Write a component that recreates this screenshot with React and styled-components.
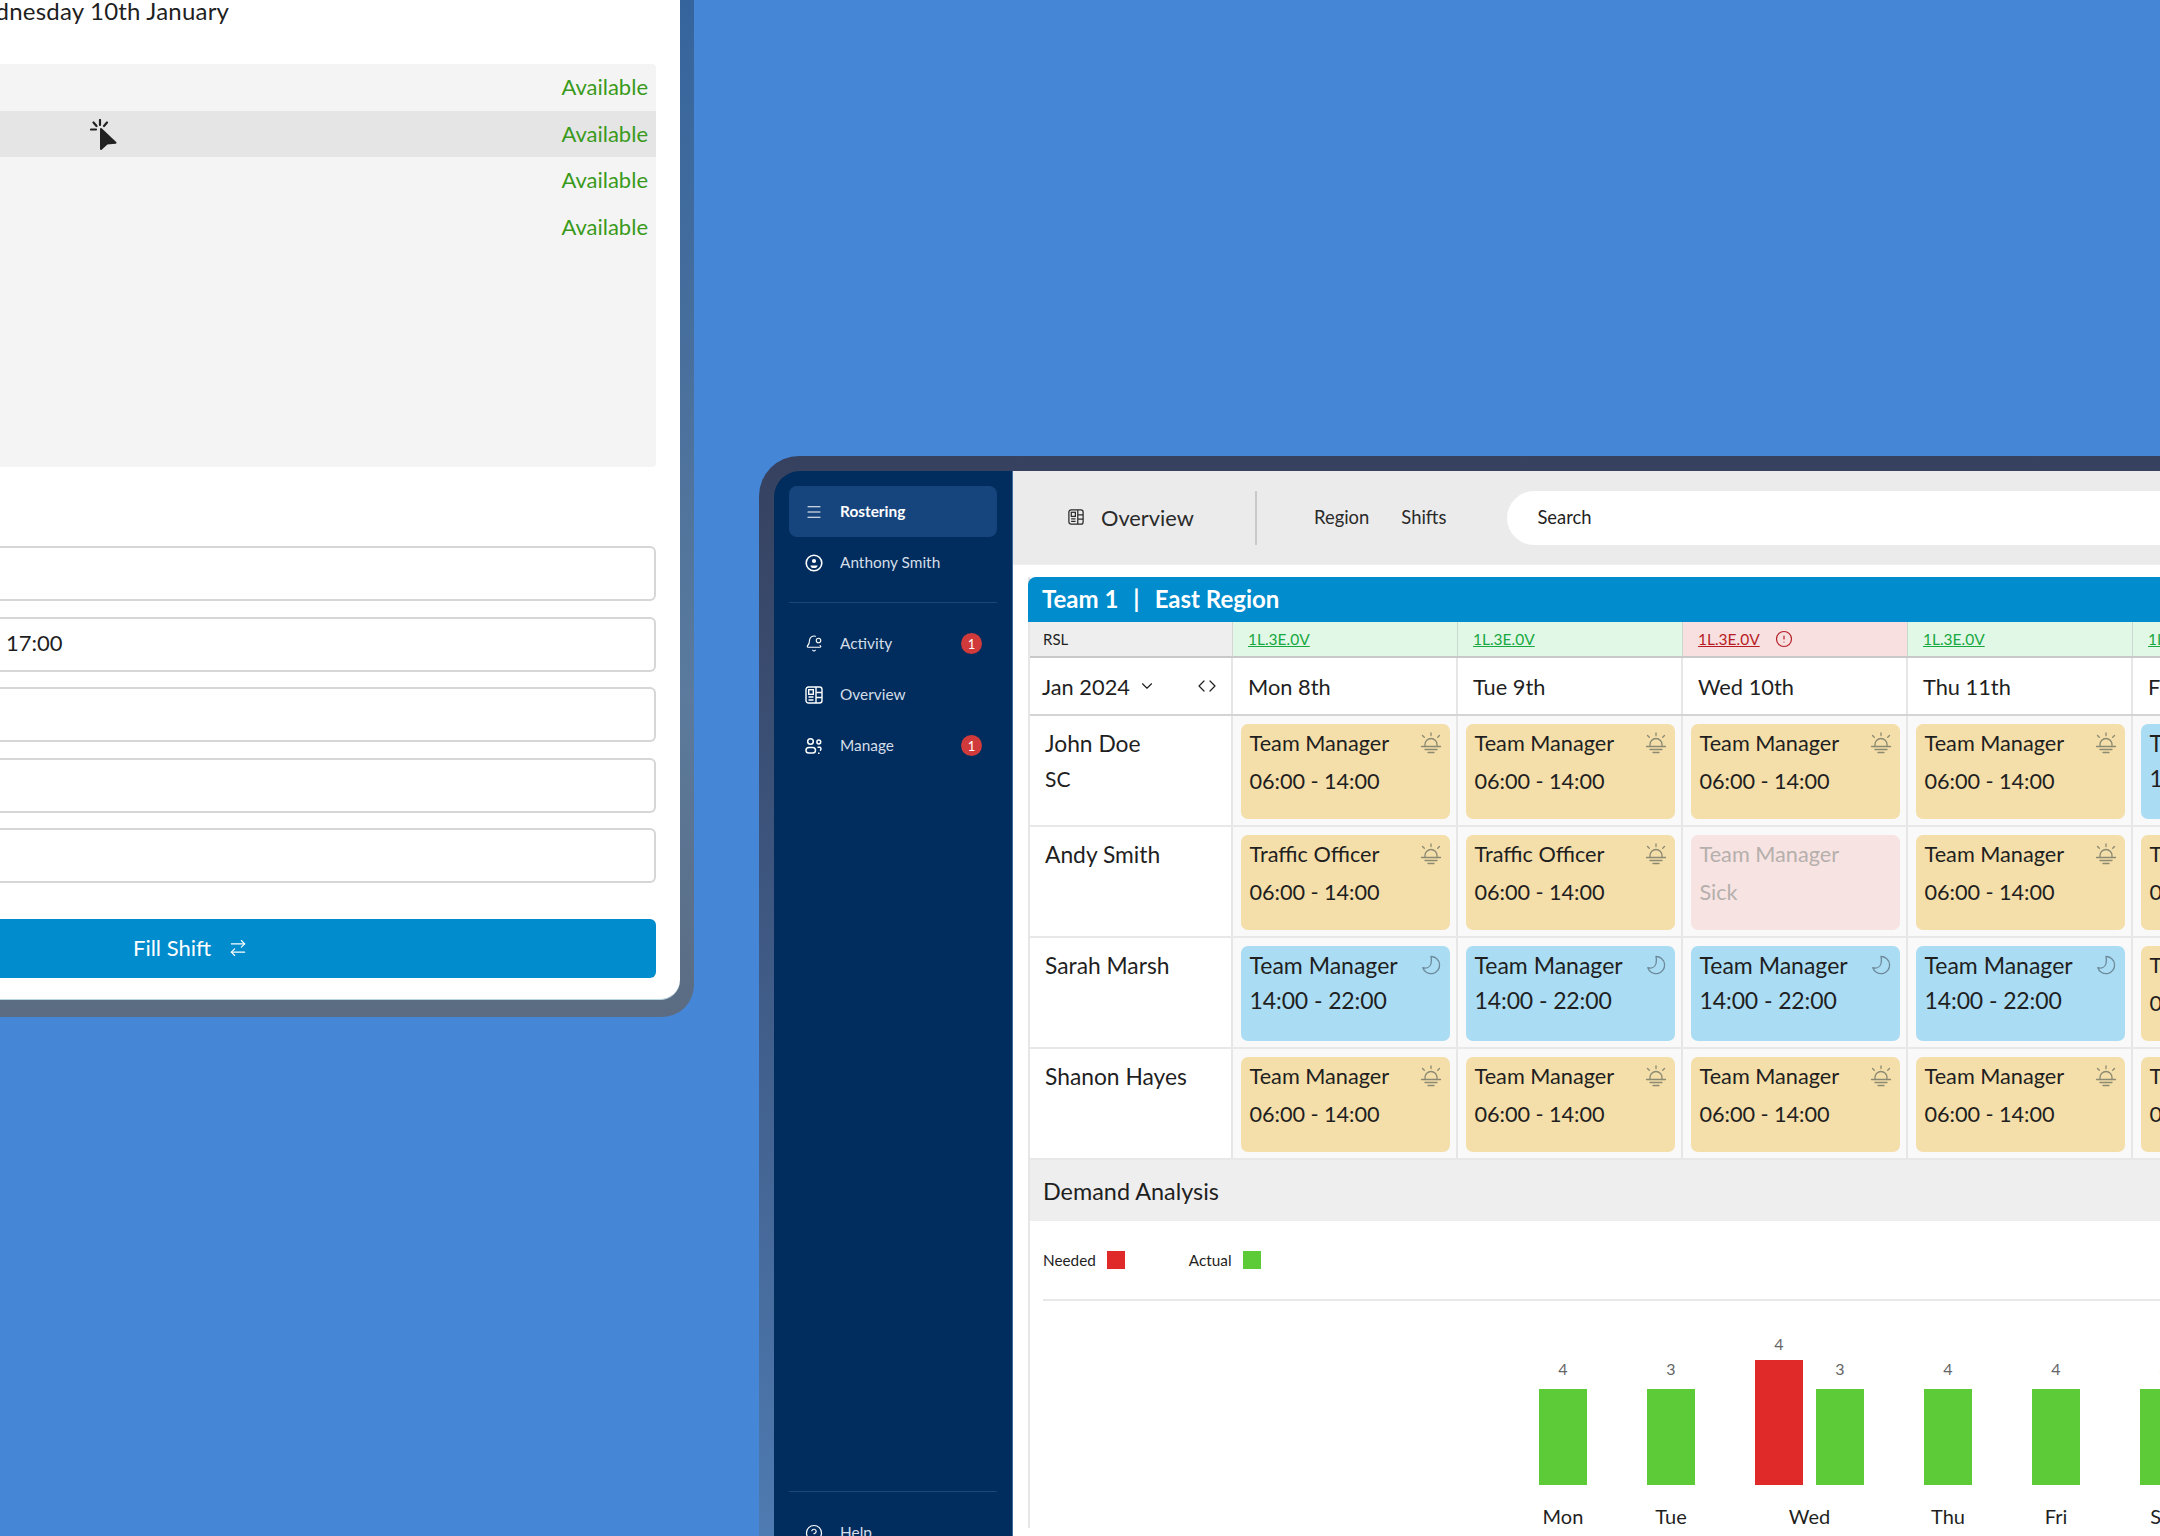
import styled, { createGlobalStyle } from "styled-components";
import {
  Menu,
  BellDot,
  CircleHelp,
  CircleAlert,
  ChevronDown,
  ChevronsLeftRight,
  ArrowRightLeft,
} from "lucide-react";

const GlobalStyle = createGlobalStyle`
  html, body { margin: 0; padding: 0; background: #4586d7; }
  * { box-sizing: border-box; }
  body { font-family: "Lato", "Noto Sans", sans-serif; color: #1f1f1f; }
`;

const Stage = styled.div`
  width: 2160px;
  height: 1536px;
  overflow: hidden;
  display: flex;
  align-items: flex-start;
  background: #4586d7;
`;

/* left window, cut off by the top and left of the picture */
const BackWindow = styled.div`
  flex: none;
  width: 900px;
  margin-left: -206px;
  margin-top: -40px;
  padding: 0 14px 17px 0;
  border-radius: 0 0 32px 0;
  background: linear-gradient(180deg, #33639d 0%, #5b7a9c 70%, #5b6c82 100%);
`;

const BackPanel = styled.div`
  background: #fff;
  border-radius: 0 0 20px 0;
  border-bottom: 1px solid #b9d5e0;
  padding: 40px 24px 21px 0;
`;

const DayTitle = styled.div`
  margin: -3px 0 0 165px;
  height: 28px;
  line-height: 28px;
  font-size: 24px;
  letter-spacing: 0.2px;
`;

const StaffList = styled.div`
  margin-top: 39px;
  height: 403px;
  background: #f4f4f4;
  border-radius: 0 4px 4px 0;
`;

const StaffRow = styled.div`
  height: 46.5px;
  display: flex;
  align-items: center;
  justify-content: flex-end;
  padding: 0 8px 1px 0;
  position: relative;
  font-size: 22px;
  color: #3a9a1c;
  background: ${(p) => (p.$hover ? "#e5e5e5" : "transparent")};
`;

const Pointer = styled.svg`
  position: absolute;
  left: 296px;
  top: 8px;
`;

const FormFields = styled.div`
  margin-top: 79px;
  display: flex;
  flex-direction: column;
  gap: 15.5px;
`;

const Field = styled.div`
  height: 55px;
  border: 2px solid #d6d6d6;
  border-left: 0;
  border-radius: 0 6px 6px 0;
  display: flex;
  align-items: center;
  padding: 0 0 3px 212px;
  font-size: 22px;
`;

const FillButton = styled.div`
  margin-top: 36px;
  height: 59px;
  background: #008ccd;
  border-radius: 0 6px 6px 0;
  color: #fff;
  font-size: 22px;
  display: flex;
  align-items: center;
  gap: 17px;
  padding: 0 0 2px 339px;
`;

/* right window, runs off the right and bottom */
const FrontWindow = styled.div`
  flex: none;
  width: 1500px;
  margin-left: 65px;
  margin-top: 456px;
  padding: 15px 0 0 15px;
  border-radius: 40px 0 0 0;
  background: linear-gradient(180deg, #36415f 0%, #3f5a85 45%, #4f7db5 100%);
  display: flex;
`;

const Sidebar = styled.aside`
  flex: none;
  width: 239px;
  height: 1105px;
  background: #002d5d;
  border-radius: 26px 0 0 0;
  padding: 15px 15px 30px;
  display: flex;
  flex-direction: column;
  border-right: 1px solid #3f6d9c;
`;

const NavItem = styled.div`
  height: 51px;
  display: flex;
  align-items: center;
  gap: 17px;
  padding-left: 16px;
  padding-right: 15px;
  border-radius: 8px;
  font-size: 15.4px;
  font-weight: ${(p) => (p.$active ? 700 : 400)};
  color: ${(p) => (p.$active ? "#fff" : "#d4dde8")};
  background: ${(p) => (p.$active ? "#16447c" : "transparent")};
`;

const NavIcon = styled.span`
  width: 18px;
  height: 18px;
  flex: none;
  display: flex;
  align-items: center;
  justify-content: center;
  color: #fff;
`;

const NavLabel = styled.span`
  flex: 1;
  padding-bottom: 2px;
`;

const Badge = styled.span`
  width: 21px;
  height: 21px;
  border-radius: 50%;
  background: #d13a3a;
  color: #fff;
  font-size: 13px;
  display: flex;
  align-items: center;
  justify-content: center;
`;

const NavRule = styled.div`
  height: 1px;
  background: #1b4676;
  margin: 14px 0 15px;
`;

const NavFoot = styled.div`
  margin-top: auto;
  border-top: 1px solid #1b4676;
  padding-top: 28px;
`;

const HelpItem = styled(NavItem)`
  height: 26px;
`;

const Main = styled.main`
  flex: 1;
  min-width: 0;
  background: #fff;
`;

const TopBar = styled.div`
  height: 94px;
  background: #ebebeb;
  display: flex;
  align-items: center;
  padding-left: 55px;
  border-bottom: 1px solid #f0f0f0;
`;

const TopTitle = styled.div`
  display: flex;
  align-items: center;
  gap: 17px;
  font-size: 21.8px;
  width: 187px;
  padding-bottom: 1px;
  color: #2a2a2a;
`;

const TopRule = styled.div`
  width: 2px;
  height: 54px;
  background: #c9c9c9;
  margin-right: 57px;
`;

const TopLink = styled.div`
  font-size: 18.4px;
  color: #2a2a2a;
  padding-bottom: 2px;
  margin-right: ${(p) => p.$gap}px;
`;

const SearchPill = styled.div`
  flex: 1;
  height: 54px;
  background: #fff;
  border-radius: 27px 0 0 27px;
  display: flex;
  align-items: center;
  padding: 0 0 2px 30px;
  font-size: 18.4px;
`;

const Roster = styled.section`
  margin: 12px 0 0 15px;
  border-left: 2px solid #e6e6e6;
`;

const TeamHeader = styled.div`
  margin-left: -2px;
  height: 45px;
  background: #008ccd;
  border-radius: 8px 0 0 0;
  color: #fff;
  font-size: 24px;
  font-weight: 700;
  display: flex;
  align-items: center;
  padding: 0 0 2px 14px;
  gap: 15px;
`;

const Grid = styled.div`
  display: grid;
  grid-template-columns: 203px repeat(6, 225px);
`;

const RslGrid = styled(Grid)`
  height: 36px;
  border-bottom: 2px solid #c9c9c9;
`;

const RslLabel = styled.div`
  background: #eee;
  font-size: 15px;
  padding-left: 13px;
  display: flex;
  align-items: center;
  border-right: 1px solid #d5d5d5;
`;

const RslCell = styled.div`
  background: ${(p) => (p.$bad ? "#f8e0e1" : "#e1f8e7")};
  color: ${(p) => (p.$bad ? "#b71c24" : "#18a83f")};
  font-size: 15.5px;
  padding-left: 15px;
  display: flex;
  align-items: center;
  gap: 15px;
  text-decoration: underline;
  border-right: 1px solid #c9d9cf;
`;

const DateGrid = styled(Grid)`
  height: 58px;
  border-bottom: 2px solid #d4d4d4;
`;

const MonthCell = styled.div`
  font-size: 21.8px;
  padding-left: 12px;
  padding-right: 12px;
  display: flex;
  align-items: center;
  border-right: 2px solid #e6e6e6;
`;

const MonthArrows = styled.span`
  margin-left: auto;
  display: flex;
`;

const MonthChevron = styled.span`
  margin-left: 8px;
  display: flex;
`;

const DateCell = styled.div`
  font-size: 21.8px;
  padding-left: 15px;
  display: flex;
  align-items: center;
  border-right: 2px solid #e6e6e6;
`;

const PersonGrid = styled(Grid)`
  height: 111px;
  border-bottom: 2px solid #e8e8e8;
`;

const PersonCell = styled.div`
  padding: 9px 0 0 15px;
  font-size: 22.8px;
  line-height: 36px;
  border-right: 2px solid #e6e6e6;
`;

const PersonTag = styled.div`
  font-size: 21px;
`;

const ShiftCell = styled.div`
  background: #f9f9f9;
  padding: 8px 6px 0 8px;
  border-right: 2px solid #e6e6e6;
`;

const shiftColors = { day: "#f4dea9", night: "#aadcf3", sick: "#f8e3e3" };

const ShiftCard = styled.div`
  height: 95px;
  border-radius: 7px;
  background: ${(p) => shiftColors[p.$kind]};
  color: ${(p) => (p.$kind === "sick" ? "#b5b0ac" : "#1f1f1f")};
  padding: 0 9px 0 8.5px;
  position: relative;
  font-size: ${(p) => (p.$kind === "night" ? "23px" : "21.7px")};
`;

const ShiftTitle = styled.div`
  height: 38px;
  line-height: 39px;
`;

const ShiftTime = styled.div`
  line-height: 36px;
  letter-spacing: ${(p) => (p.$tight ? "-0.1px" : "-0.05px")};
  margin-top: ${(p) => (p.$tight ? "-2px" : "1px")};
`;

const ShiftIcon = styled.svg`
  position: absolute;
  top: 8px;
  right: 8px;
`;

const DemandHeader = styled.div`
  height: 61px;
  background: #eee;
  font-size: 23.4px;
  padding-left: 13px;
  display: flex;
  align-items: center;
`;

const Legend = styled.div`
  margin-left: 13px;
  height: 80px;
  border-bottom: 2px solid #e8e8e8;
  display: flex;
  align-items: center;
  font-size: 15.3px;
`;

const LegendItem = styled.div`
  display: flex;
  align-items: center;
  gap: 11px;
  margin-right: 64px;
`;

const Swatch = styled.span`
  width: 18px;
  height: 18px;
  background: ${(p) => p.$color};
`;

const Chart = styled.div`
  margin-left: 509px;
  display: flex;
  gap: 60px;
  align-items: flex-end;
  height: 184px;
`;

const DayGroup = styled.div`
  display: flex;
  gap: 13px;
  align-items: flex-end;
`;

const BarColumn = styled.div`
  width: 48px;
  display: flex;
  flex-direction: column;
  align-items: center;
  gap: ${(p) => p.$gap}px;
  font-size: 16px;
  color: #666;
`;

const Bar = styled.div`
  width: 48px;
  height: ${(p) => p.$h}px;
  background: ${(p) => p.$color};
`;

const AxisRow = styled.div`
  margin-left: 509px;
  display: flex;
  gap: 60px;
  font-size: 20px;
  margin-top: 19px;
`;

const AxisLabel = styled.div`
  flex: none;
  width: ${(p) => p.$w}px;
  text-align: center;
`;

const OverviewGlyph = ({ size = 18 }) => (
  <svg width={size} height={size} viewBox="0 0 18 18" fill="none" stroke="currentColor" strokeWidth="1.4">
    <rect x="1" y="1" width="16" height="16" rx="2.5" />
    <path d="M11 1v16M11 6.5h6M11 11.5h6M3.5 11h5M3.5 14h5" />
    <rect x="3.7" y="3.7" width="4.6" height="4.6" />
  </svg>
);

const ProfileGlyph = () => (
  <svg width="18" height="18" viewBox="0 0 18 18" fill="none" stroke="currentColor" strokeWidth="1.6">
    <circle cx="9" cy="9" r="7.8" />
    <circle cx="9" cy="7" r="2.1" fill="currentColor" stroke="none" />
    <path d="M5.4 11.4h7.2c0 1.6-1.6 2.6-3.6 2.6s-3.6-1-3.6-2.6z" fill="currentColor" stroke="none" />
  </svg>
);

const ManageGlyph = () => (
  <svg width="18" height="18" viewBox="0 0 18 18" fill="none" stroke="currentColor" strokeWidth="1.5">
    <circle cx="5.5" cy="4.5" r="2.8" />
    <circle cx="13.8" cy="5" r="1.9" />
    <rect x="1" y="10.5" width="9.5" height="5.5" rx="2.75" />
    <path d="M12.5 10.2h2.5a2 2 0 0 1 0 3.4M13 16.2h1.5" />
  </svg>
);

const DayGlyph = () => (
  <ShiftIcon width="22" height="22" viewBox="0 0 22 22" fill="none" stroke="#8c8a72" strokeWidth="1.3" strokeLinecap="round">
    <path d="M5 14.5v-2a6 6 0 0 1 12 0v2" />
    <path d="M1.5 14.5h19M5 17.5h12M8 20.5h6M11 1v2.5M2.5 3.5l1.8 1.8M19.5 3.5l-1.8 1.8" />
  </ShiftIcon>
);

const NightGlyph = () => (
  <ShiftIcon width="22" height="22" viewBox="0 0 22 22" fill="none" stroke="#6d8a9a" strokeWidth="1.3" strokeLinejoin="round">
    <path d="M11 2.5a8.6 8.6 0 1 1-8.2 11.2c3.6.9 7.2-.4 8.2-4 .6-2.4.6-4.8 0-7.2z" />
  </ShiftIcon>
);

const days = ["Mon 8th", "Tue 9th", "Wed 10th", "Thu 11th", "Fri 12th", "Sat 13th"];

const tm = "Team Manager";
const to = "Traffic Officer";
const early = "06:00 - 14:00";
const late = "14:00 - 22:00";

const people = [
  {
    name: "John Doe",
    tag: "SC",
    shifts: [
      ["day", tm, early],
      ["day", tm, early],
      ["day", tm, early],
      ["day", tm, early],
      ["night", tm, late],
    ],
  },
  {
    name: "Andy Smith",
    shifts: [
      ["day", to, early],
      ["day", to, early],
      ["sick", tm, "Sick"],
      ["day", tm, early],
      ["day", tm, early],
    ],
  },
  {
    name: "Sarah Marsh",
    shifts: [
      ["night", tm, late],
      ["night", tm, late],
      ["night", tm, late],
      ["night", tm, late],
      ["day", tm, early],
    ],
  },
  {
    name: "Shanon Hayes",
    shifts: [
      ["day", tm, early],
      ["day", tm, early],
      ["day", tm, early],
      ["day", tm, early],
      ["day", tm, early],
    ],
  },
];

const chart = [
  { label: "Mon", bars: [{ v: 4, h: 96, gap: 11, color: "#5ccb37" }] },
  { label: "Tue", bars: [{ v: 3, h: 96, gap: 11, color: "#5ccb37" }] },
  {
    label: "Wed",
    bars: [
      { v: 4, h: 125, gap: 7, color: "#e02a2a" },
      { v: 3, h: 96, gap: 11, color: "#5ccb37" },
    ],
  },
  { label: "Thu", bars: [{ v: 4, h: 96, gap: 11, color: "#5ccb37" }] },
  { label: "Fri", bars: [{ v: 4, h: 96, gap: 11, color: "#5ccb37" }] },
  { label: "Sat", bars: [{ v: 3, h: 96, gap: 11, color: "#5ccb37" }] },
];

const App = () => {
  return (
    <>
      <GlobalStyle />
      <Stage>
        <BackWindow>
          <BackPanel>
            <DayTitle>Wednesday 10th January</DayTitle>
            <StaffList>
              <StaffRow>Available</StaffRow>
              <StaffRow $hover>
                <Pointer width="30" height="32" viewBox="0 0 30 32">
                  <path d="M11 10v20l6-5.6 8.5-.6z" fill="#222" stroke="#222" strokeWidth="2" strokeLinejoin="round" />
                  <path d="M10 1v5M3.5 3.5l3 3.5M17 3.5l-3 3.5M1 10.5h5" stroke="#222" strokeWidth="2.2" strokeLinecap="round" fill="none" />
                </Pointer>
                Available
              </StaffRow>
              <StaffRow>Available</StaffRow>
              <StaffRow>Available</StaffRow>
            </StaffList>
            <FormFields>
              <Field />
              <Field>17:00</Field>
              <Field />
              <Field />
              <Field />
            </FormFields>
            <FillButton>
              Fill Shift
              <ArrowRightLeft size={20} strokeWidth={1.4} />
            </FillButton>
          </BackPanel>
        </BackWindow>

        <FrontWindow>
          <Sidebar>
            <NavItem $active>
              <NavIcon><Menu size={22} strokeWidth={1.5} /></NavIcon>
              <NavLabel>Rostering</NavLabel>
            </NavItem>
            <NavItem>
              <NavIcon><ProfileGlyph /></NavIcon>
              <NavLabel>Anthony Smith</NavLabel>
            </NavItem>
            <NavRule />
            <NavItem>
              <NavIcon><BellDot size={21} strokeWidth={1.5} /></NavIcon>
              <NavLabel>Activity</NavLabel>
              <Badge>1</Badge>
            </NavItem>
            <NavItem>
              <NavIcon><OverviewGlyph /></NavIcon>
              <NavLabel>Overview</NavLabel>
            </NavItem>
            <NavItem>
              <NavIcon><ManageGlyph /></NavIcon>
              <NavLabel>Manage</NavLabel>
              <Badge>1</Badge>
            </NavItem>
            <NavFoot>
              <HelpItem>
                <NavIcon><CircleHelp size={20} strokeWidth={1.6} /></NavIcon>
                <NavLabel>Help</NavLabel>
              </HelpItem>
            </NavFoot>
          </Sidebar>

          <Main>
            <TopBar>
              <TopTitle>
                <OverviewGlyph size={16} />
                Overview
              </TopTitle>
              <TopRule />
              <TopLink $gap={32}>Region</TopLink>
              <TopLink $gap={61}>Shifts</TopLink>
              <SearchPill>Search</SearchPill>
            </TopBar>

            <Roster>
              <TeamHeader>
                <span>Team 1</span>
                <span>|</span>
                <span>East Region</span>
              </TeamHeader>

              <RslGrid>
                <RslLabel>RSL</RslLabel>
                {days.map((d, i) => (
                  <RslCell key={d} $bad={i === 2}>
                    1L.3E.0V
                    {i === 2 && <CircleAlert size={18} strokeWidth={1.6} />}
                  </RslCell>
                ))}
              </RslGrid>

              <DateGrid>
                <MonthCell>
                  Jan 2024
                  <MonthChevron><ChevronDown size={18} strokeWidth={1.5} /></MonthChevron>
                  <MonthArrows>
                    <ChevronsLeftRight size={24} strokeWidth={1.2} />
                  </MonthArrows>
                </MonthCell>
                {days.map((d) => (
                  <DateCell key={d}>{d}</DateCell>
                ))}
              </DateGrid>

              {people.map((p) => (
                <PersonGrid key={p.name}>
                  <PersonCell>
                    {p.name}
                    {p.tag && <PersonTag>{p.tag}</PersonTag>}
                  </PersonCell>
                  {p.shifts.map(([kind, title, time], i) => (
                    <ShiftCell key={i}>
                      <ShiftCard $kind={kind}>
                        <ShiftTitle>{title}</ShiftTitle>
                        <ShiftTime $tight={kind === "night"}>{time}</ShiftTime>
                        {kind === "day" && <DayGlyph />}
                        {kind === "night" && <NightGlyph />}
                      </ShiftCard>
                    </ShiftCell>
                  ))}
                </PersonGrid>
              ))}

              <DemandHeader>Demand Analysis</DemandHeader>
              <Legend>
                <LegendItem>
                  Needed
                  <Swatch $color="#e02a2a" />
                </LegendItem>
                <LegendItem>
                  Actual
                  <Swatch $color="#5ccb37" />
                </LegendItem>
              </Legend>
              <Chart>
                {chart.map((g) => (
                  <DayGroup key={g.label}>
                    {g.bars.map((b, i) => (
                      <BarColumn key={i} $gap={b.gap}>
                        {b.v}
                        <Bar $h={b.h} $color={b.color} />
                      </BarColumn>
                    ))}
                  </DayGroup>
                ))}
              </Chart>
              <AxisRow>
                {chart.map((g) => (
                  <AxisLabel key={g.label} $w={g.bars.length === 2 ? 109 : 48}>
                    {g.label}
                  </AxisLabel>
                ))}
              </AxisRow>
            </Roster>
          </Main>
        </FrontWindow>
      </Stage>
    </>
  );
};

export default App;
